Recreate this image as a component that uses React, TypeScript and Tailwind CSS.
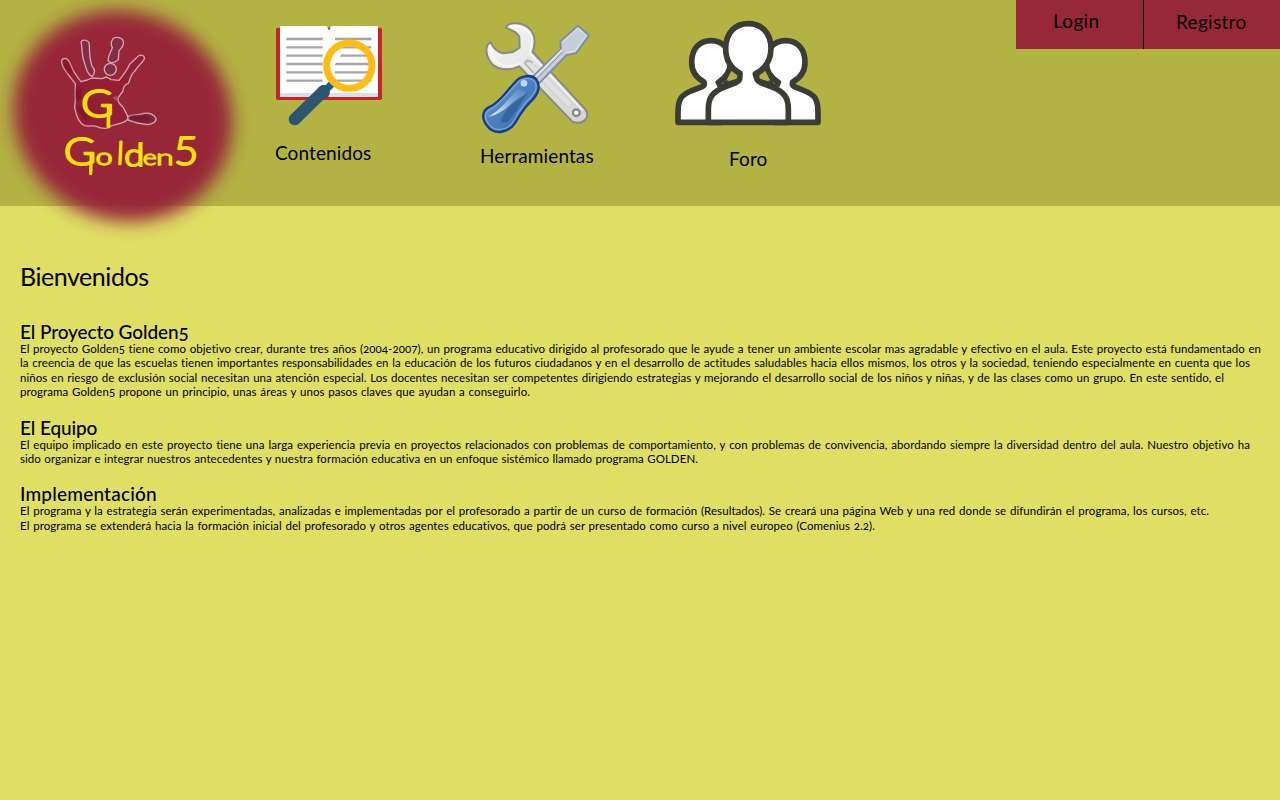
import type { ReactNode } from "react";

function Logo() {
  return (
    <svg width="250" height="250" viewBox="0 0 750 750" className="block overflow-visible" role="img" aria-label="Golden5">
      <defs>
        <filter id="soft" x="-20%" y="-20%" width="140%" height="140%">
          <feGaussianBlur stdDeviation="27" />
        </filter>
        <filter id="smudge">
          <feGaussianBlur stdDeviation="5" />
        </filter>
      </defs>
      <ellipse cx="369" cy="348" rx="334" ry="311" fill="#962837" filter="url(#soft)" transform="rotate(30 369 348)" />
      <g stroke="#d3a5b2" strokeWidth="4" strokeLinejoin="round">
        <path
          d="M226 251 C214 235 202 222 190 202 C184 190 182 180 190 176 C198 173 205 178 210 190 C216 208 222 218 233 232 L243 245 L262 240 L276 234 L305 236 L319 231 L334 239 L357 241 C371 224 383 208 389 193 L415 168 C425 162 437 168 432 179 C424 190 411 202 404 214 C391 224 391 240 385 250 C375 252 369 263 369 273 L355 292 C350 303 358 312 369 321 L380 342 L385 356 L374 365 C362 371 347 374 334 377 C327 388 303 386 291 380 C280 374 268 381 254 377 C238 371 229 350 224 323 L226 300 C224 282 226 266 226 251 Z"
          fill="#941f35"
        />
        <path d="M243 126 C248 116 268 120 268 134 C268 157 270 180 276 199 C288 211 284 222 276 230 C263 223 259 208 254 190 C244 168 248 144 243 126 Z" fill="#842c46" />
        <path d="M337 120 C340 109 363 110 369 121 C374 135 365 145 357 152 L355 178 C348 187 329 194 324 180 C326 163 333 155 337 143 C332 133 333 126 337 120 Z" fill="#842c46" />
        <circle cx="331" cy="208" r="18" fill="#842c46" />
        <path d="M384 349 C400 342 419 346 432 340 C448 338 462 345 468 355 C470 365 458 372 443 374 L412 369 L384 360 Z" fill="#7f2945" />
      </g>
      <g fill="none" stroke="#760820" strokeWidth="14" strokeLinecap="round" filter="url(#smudge)" opacity=".75">
        <path d="M235 270 L235 295 M240 328 L260 352 M200 195 L209 213 M400 354 L445 357" />
      </g>
      <path d="M337 291 L353 289 L350 304 Z" fill="#a5536b" />
      <g fill="#ffdf0d" stroke="#ffdf0d" strokeWidth="5" strokeLinejoin="round" strokeLinecap="round" fontFamily="Lato, sans-serif" fontWeight="300">
        <text x="243" y="350" fontSize="114" strokeWidth="6" textLength="98" lengthAdjust="spacingAndGlyphs">G</text>
        <path d="M326 318 L325 379" strokeWidth="11" />
        <text x="191" y="495" fontSize="112" strokeWidth="6" textLength="97" lengthAdjust="spacingAndGlyphs">G</text>
        <path d="M274 465 L272 521" strokeWidth="10" />
        <text x="287" y="495" fontSize="68" textLength="50" lengthAdjust="spacingAndGlyphs">o</text>
        <text x="349" y="493" fontSize="95" transform="rotate(3 357 490)">l</text>
        <text x="373" y="498" fontSize="94" strokeWidth="6" textLength="60" lengthAdjust="spacingAndGlyphs">d</text>
        <text x="428" y="495" fontSize="62" strokeWidth="4" textLength="42" lengthAdjust="spacingAndGlyphs">e</text>
        <text x="468" y="494" fontSize="64" strokeWidth="4" textLength="53" lengthAdjust="spacingAndGlyphs">n</text>
        <text x="521" y="496" fontSize="116" strokeWidth="6" textLength="74" lengthAdjust="spacingAndGlyphs">5</text>
      </g>
    </svg>
  );
}

function BookIcon() {
  return (
    <svg width="130" height="120" viewBox="0 0 390 360" className="block">
      <rect x="33" y="53" width="318" height="217" rx="6" fill="#c92228" />
      <path d="M45 48 H180 Q190 49 192 58 Q194 49 204 48 H339 V260 H45 Z" fill="#fff" />
      <path d="M45 249 H339 V260 H45 Z" fill="#cfe3ec" />
      <path d="M187 53 L192 61 L197 53 Z" fill="#c92228" />
      <path d="M64 87 H173 M64 112 H173 M64 137 H173 M64 162 H173 M64 187 H173 M64 212 H173 M210 87 H319 M210 112 H319 M217 137 H319 M210 162 H319 M210 187 H319 M210 212 H319" stroke="#a6a4a9" strokeWidth="7" />
      <path d="M202 220 L188 234" stroke="#155d92" strokeWidth="22" />
      <path d="M176 243 L89 328" stroke="#2c566f" strokeWidth="36" strokeLinecap="round" />
      <path d="M160 233 Q168 223 182 226 L194 238 Q197 250 190 260 L178 266 Z" fill="#2c566f" />
      <path d="M204 160 Q204 125 240 118 L204 172 Z" fill="#fff" />
      <circle cx="253" cy="167" r="68" fill="none" stroke="#ffbd12" strokeWidth="21" />
    </svg>
  );
}

function ToolsIcon() {
  return (
    <svg width="140" height="125" viewBox="0 0 420 375" className="block">
      <defs>
        <linearGradient id="steel" x1="0" y1="0" x2="1" y2="1">
          <stop offset="0" stopColor="#fafafa" />
          <stop offset=".5" stopColor="#e2e2e1" />
          <stop offset="1" stopColor="#d2d2d1" />
        </linearGradient>
        <linearGradient id="grip" x1="0" y1="0" x2="1" y2="1">
          <stop offset="0" stopColor="#72a0d3" />
          <stop offset=".5" stopColor="#4b7fbd" />
          <stop offset="1" stopColor="#396eae" />
        </linearGradient>
        <linearGradient id="shine" x1="0" y1="1" x2="1" y2="0">
          <stop offset="0" stopColor="#fff" />
          <stop offset="1" stopColor="#8eb1da" stopOpacity=".2" />
        </linearGradient>
      </defs>
      <path d="M108 53 C112 38 144 36 164 46 C194 61 200 92 188 126 L346 298 C362 322 341 347 307 335 L148 169 C117 184 75 182 57 149 C46 130 46 104 62 97 C71 117 82 126 99 130 L129 126 L149 113 L148 81 C142 66 127 62 108 53 Z" fill="url(#steel)" stroke="#888987" strokeWidth="6" strokeLinejoin="round" />
      <path d="M119 48 C151 43 176 61 185 81 C188 99 180 117 179 130 L337 300 M62 109 C58 154 103 182 146 160" fill="none" stroke="#fff" strokeWidth="4" opacity=".8" />
      <path d="M173 157 L295 280" stroke="#cfcfcf" strokeWidth="22" strokeLinecap="round" />
      <path d="M174 158 L295 280" stroke="#e1e1e0" strokeWidth="16" strokeLinecap="round" />
      <path d="M188 158 L173 152 L165 160 L190 188" fill="none" stroke="#aaaaac" strokeWidth="4" strokeLinejoin="round" />
      <circle cx="319" cy="308" r="10" fill="#fff" stroke="#858685" strokeWidth="7" />
      <path d="M271 94 L324 47 L357 76 L319 129 L290 135 L207 220 L187 202 L273 118 Z" fill="#c5cfd9" stroke="#838f9e" strokeWidth="6" strokeLinejoin="round" />
      <path d="M277 97 L323 54 L350 77 L315 123 L288 128" fill="none" stroke="#dde7ed" strokeWidth="3" />
      <path d="M198 209 L280 124" stroke="#8793a4" strokeWidth="3" />
      <path d="M192 204 L276 119" stroke="#e4e9ef" strokeWidth="4" />
      <path d="M135 217 C147 200 180 190 198 207 C212 226 206 248 190 267 C165 290 151 311 136 338 C117 368 75 376 55 352 C32 326 35 302 60 290 C90 278 111 241 135 217 Z" fill="url(#grip)" stroke="#173f85" strokeWidth="7" />
      <path d="M139 222 C155 202 186 200 197 219 C204 245 184 259 171 274 C148 298 137 325 124 343 C103 363 77 363 60 347 C42 327 42 308 60 298 C90 286 118 242 139 222 Z" fill="none" stroke="#79a5da" strokeWidth="4" />
      <path d="M54 320 C89 306 122 257 142 239 C162 239 175 246 162 256 C119 274 108 310 54 320 Z" fill="url(#shine)" />
      <path d="M93 337 C96 308 123 282 175 247 C150 282 134 315 112 337 Z" fill="#285990" opacity=".65" />
      <circle cx="162" cy="220" r="10" fill="#d3e2f5" opacity=".85" />
    </svg>
  );
}

function PeopleIcon() {
  return (
    <svg width="170" height="120" viewBox="0 0 510 360" className="block">
      <g fill="#fff" stroke="#3b3c36" strokeWidth="17" strokeLinejoin="round">
        <path d="M39 337 V307 C39 268 49 255 78 243 L112 230 Q120 226 117 216 C90 202 80 182 80 157 C80 116 103 92 138 92 C173 92 196 116 196 157 C196 182 186 202 160 217 L170 237 V337 Z" />
        <path d="M459 337 V307 C459 268 449 255 420 243 L388 230 Q380 226 383 216 C410 202 420 182 420 157 C420 116 397 92 362 92 C327 92 304 116 304 157 C304 182 314 202 340 217 L330 237 V337 Z" />
      </g>
      <path d="M199 187 L226 198 L219 210 L178 222 Z M301 187 L274 198 L281 210 L322 222 Z" fill="#b3b344" stroke="#3b3c36" strokeWidth="9" />
      <path d="M130 337 V297 C130 261 145 245 176 232 L213 218 Q220 215 224 208 L225 190 C195 174 182 150 182 115 C182 69 210 41 250 41 C290 41 318 69 318 115 C318 150 305 174 271 191 L276 208 Q280 215 287 218 L324 232 C355 245 370 261 370 297 V337 Z" fill="#fff" stroke="#3b3c36" strokeWidth="17" strokeLinejoin="round" />
      <path d="M199 183 L217 196 L212 203 L184 212 Z M301 183 L283 196 L288 203 L316 212 Z" fill="#b3b344" />
    </svg>
  );
}

function Line({ className, children }: { className: string; children: ReactNode }) {
  return <span className={`block whitespace-nowrap [text-align-last:justify] ${className}`}>{children}</span>;
}

function Section({ title, titleClass, className, children }: { title: string; titleClass: string; className: string; children: ReactNode }) {
  return (
    <section className={className}>
      <h2 className={`text-[19px] leading-[19px] font-medium whitespace-nowrap oldstyle-nums ${titleClass}`}>{title}</h2>
      <p className="text-[11.5px] leading-[14.4px] tracking-[0.06px] oldstyle-nums">{children}</p>
    </section>
  );
}

export default function App() {
  return (
    <div className="min-h-screen bg-[#dfdf64] font-[Lato,'Noto_Sans',sans-serif] text-black [font-variant-ligatures:none]">
      <header className="flex h-[206px] bg-[#b3b344]">
        <a className="w-[265px] shrink-0">
          <Logo />
        </a>
        <nav className="flex grow pt-[10px] text-[19px] leading-6 tracking-[0.1px]">
          <a className="w-[205px]">
            <BookIcon />
            <span className="mt-[11px] ml-[10px] block">Contenidos</span>
          </a>
          <a className="w-[195px]">
            <ToolsIcon />
            <span className="mt-[9px] ml-[10px] block">Herramientas</span>
          </a>
          <a className="w-[170px]">
            <PeopleIcon />
            <span className="mt-[17px] ml-[64px] block">Foro</span>
          </a>
        </nav>
        <div className="flex h-[49px] w-[264px] shrink-0 bg-[#962837] text-[19px] leading-6 tracking-[0.3px]">
          <a className="w-[128px] border-r border-black pt-[9px] pl-[37px]">Login</a>
          <a className="pt-[10px] pl-[32px]">Registro</a>
        </div>
      </header>
      <main className="pt-[56px] pl-5">
        <h1 className="text-[25px] leading-7 tracking-[-0.45px]">Bienvenidos</h1>
        <Section title="El Proyecto Golden5" titleClass="mb-px tracking-[-0.1px]" className="mt-[32px]">
          <Line className="w-[1241px]">El proyecto Golden5 tiene como objetivo crear, durante tres años (2004-2007), un programa educativo dirigido al profesorado que le ayude a tener un ambiente escolar mas agradable y efectivo en el aula. Este proyecto está fundamentado en</Line>
          <Line className="w-[1230px]">la creencia de que las escuelas tienen importantes responsabilidades en la educación de los futuros ciudadanos y en el desarrollo de actitudes saludables hacia ellos mismos, los otros y la sociedad, teniendo especialmente en cuenta que los</Line>
          <Line className="w-[1204px]">niños en riesgo de exclusión social necesitan una atención especial. Los docentes necesitan ser competentes dirigiendo estrategias y mejorando el desarrollo social de los niños y niñas, y de las clases como un grupo. En este sentido, el</Line>
          <Line className="w-[510px]">programa Golden5 propone un principio, unas áreas y unos pasos claves que ayudan a conseguirlo.</Line>
        </Section>
        <Section title="El Equipo" titleClass="mb-px tracking-[-0.1px]" className="mt-[18px]">
          <Line className="w-[1230px]">El equipo implicado en este proyecto tiene una larga experiencia previa en proyectos relacionados con problemas de comportamiento, y con problemas de convivencia, abordando siempre la diversidad dentro del aula. Nuestro objetivo ha</Line>
          <Line className="w-[678px]">sido organizar e integrar nuestros antecedentes y nuestra formación educativa en un enfoque sistémico llamado programa GOLDEN.</Line>
        </Section>
        <Section title="Implementación" titleClass="mb-px tracking-[0.2px]" className="mt-[18px]">
          <Line className="w-[1189px]">El programa y la estrategia serán experimentadas, analizadas e implementadas por el profesorado a partir de un curso de formación (Resultados). Se creará una página Web y una red donde se difundirán el programa, los cursos, etc.</Line>
          <Line className="w-[855px]">El programa se extenderá hacia la formación inicial del profesorado y otros agentes educativos, que podrá ser presentado como curso a nivel europeo (Comenius 2.2).</Line>
        </Section>
      </main>
    </div>
  );
}
